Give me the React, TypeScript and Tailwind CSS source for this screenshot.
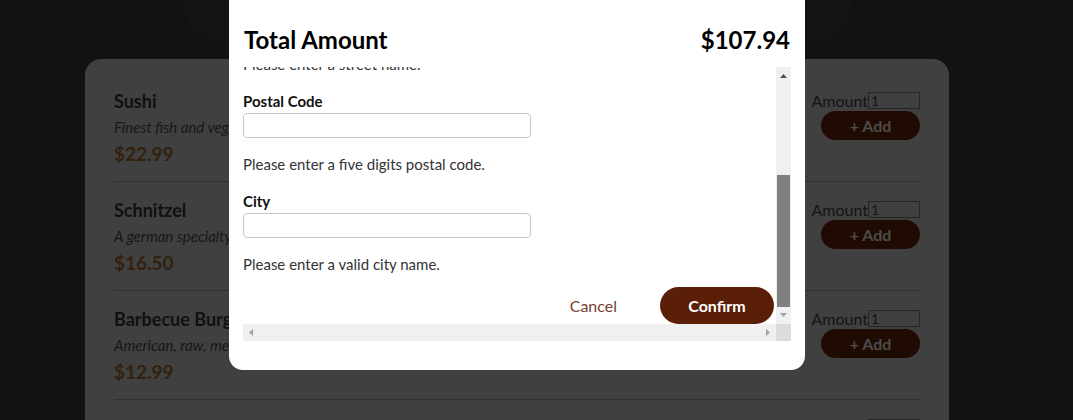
const meals = [
  { name: 'Sushi', description: 'Finest fish and veggies', price: 22.99 },
  { name: 'Schnitzel', description: 'A german specialty!', price: 16.5 },
  { name: 'Barbecue Burger', description: 'American, raw, meaty', price: 12.99 },
  { name: 'Green Bowl', description: 'Healthy...and green...', price: 18.99 },
];

const fields = [
  { label: 'Your Name', error: 'Please enter a valid name.' },
  { label: 'Street', error: 'Please enter a street name.' },
  { label: 'Postal Code', error: 'Please enter a five digits postal code.' },
  { label: 'City', error: 'Please enter a valid city name.' },
];

function MealItem({ meal }: { meal: (typeof meals)[number] }) {
  return (
    <li className="flex justify-between border-b border-[#2f2f2f] pt-4 pb-[15px]">
      <div>
        <h3 className="text-[18px] font-bold leading-[24px] text-[#101010]">{meal.name}</h3>
        <p className="mt-[2px] text-[15px] italic leading-[24px] text-[#171717]">{meal.description}</p>
        <p className="mt-[3px] text-[19px] font-bold leading-[24px] text-[#33210f]">
          ${meal.price.toFixed(2)}
        </p>
      </div>
      <div className="flex flex-col items-end pt-[3px]">
        <div className="flex items-center text-[16px] leading-[17px] text-[#141414]">
          <label>Amount</label>
          <input
            readOnly
            value="1"
            className="h-[17px] w-[52px] border border-[#262626] bg-transparent px-[2px] text-[14px] leading-[15px] text-[#141414] outline-none"
          />
        </div>
        <button className="mt-[2px] h-[29px] w-[99px] rounded-full bg-[#200b02] text-[16px] font-bold text-[#4b4b4b]">
          + Add
        </button>
      </div>
    </li>
  );
}

function Arrow({ dir, color }: { dir: 'up' | 'down' | 'left' | 'right'; color: string }) {
  const points = {
    up: '0,4 7,4 3.5,0',
    down: '0,0 7,0 3.5,4',
    left: '4,0 4,7 0,3.5',
    right: '0,0 0,7 4,3.5',
  }[dir];
  const vertical = dir === 'up' || dir === 'down';
  return (
    <svg width={vertical ? 7 : 4} height={vertical ? 4 : 7} viewBox={vertical ? '0 0 7 4' : '0 0 4 7'}>
      <polygon points={points} fill={color} />
    </svg>
  );
}

export default function App() {
  return (
    <div className="relative h-[420px] w-[1073px] overflow-hidden bg-[#121212] font-[Lato,sans-serif]">
      <div className="ml-[183px] h-[42px] w-[669px] rounded-b-[44px] bg-[#141414]" />

      <section className="ml-[85px] mt-[17px] w-[864px] rounded-[16px] bg-[#404040] px-[29px] pt-[14px]">
        <ul>
          {meals.map((meal) => (
            <MealItem key={meal.name} meal={meal} />
          ))}
        </ul>
      </section>

      <div className="absolute left-[229px] top-0 h-[370px] w-[576px] rounded-b-[14px] bg-white px-[14px]">
        <div className="flex items-center justify-between pt-[25px] text-[24px] font-bold leading-[30px] text-black">
          <span className="pl-[1px]">Total Amount</span>
          <span className="pr-[1px]">$107.94</span>
        </div>

        <div className="mt-[12px] grid h-[274px] w-[548px] grid-cols-[533px_15px] grid-rows-[257px_17px]">
          <div className="flex flex-col justify-end overflow-hidden">
            <form>
              {fields.map((field) => (
                <div key={field.label} className="mb-[15px]">
                  <label className="block text-[15px] font-bold leading-[22px] text-[#111]">{field.label}</label>
                  <input className="mt-[1px] block h-[25px] w-[288px] rounded-[4px] border border-[#c8c8c8] outline-none" />
                  <p className="mt-[15px] text-[15px] leading-[22px] text-[#333]">{field.error}</p>
                </div>
              ))}
              <div className="-mt-[3px] flex items-center justify-end pr-[2px]">
                <button type="button" className="mr-[43px] text-[16px] text-[#774030]">
                  Cancel
                </button>
                <button
                  type="button"
                  className="h-[37px] w-[114px] rounded-full bg-[#5a1f06] text-[16px] font-bold text-white"
                >
                  Confirm
                </button>
              </div>
            </form>
          </div>

          {/* vertical scrollbar */}
          <div className="flex flex-col items-center bg-[#f0f0f0]">
            <div className="flex h-[15px] w-full items-center justify-center pt-[2px]">
              <Arrow dir="up" color="#505050" />
            </div>
            <div className="flex-1 w-full">
              <div className="ml-[1px] mt-[93px] h-[132px] w-[13px] bg-[#808080]" />
            </div>
            <div className="flex h-[17px] w-full items-center justify-center pb-[2px]">
              <Arrow dir="down" color="#a3a3a3" />
            </div>
          </div>

          {/* horizontal scrollbar */}
          <div className="flex items-center justify-between bg-[#f0f0f0] px-[6px]">
            <Arrow dir="left" color="#a3a3a3" />
            <Arrow dir="right" color="#a3a3a3" />
          </div>
          <div className="bg-[#dcdcdc]" />
        </div>
      </div>
    </div>
  );
}
